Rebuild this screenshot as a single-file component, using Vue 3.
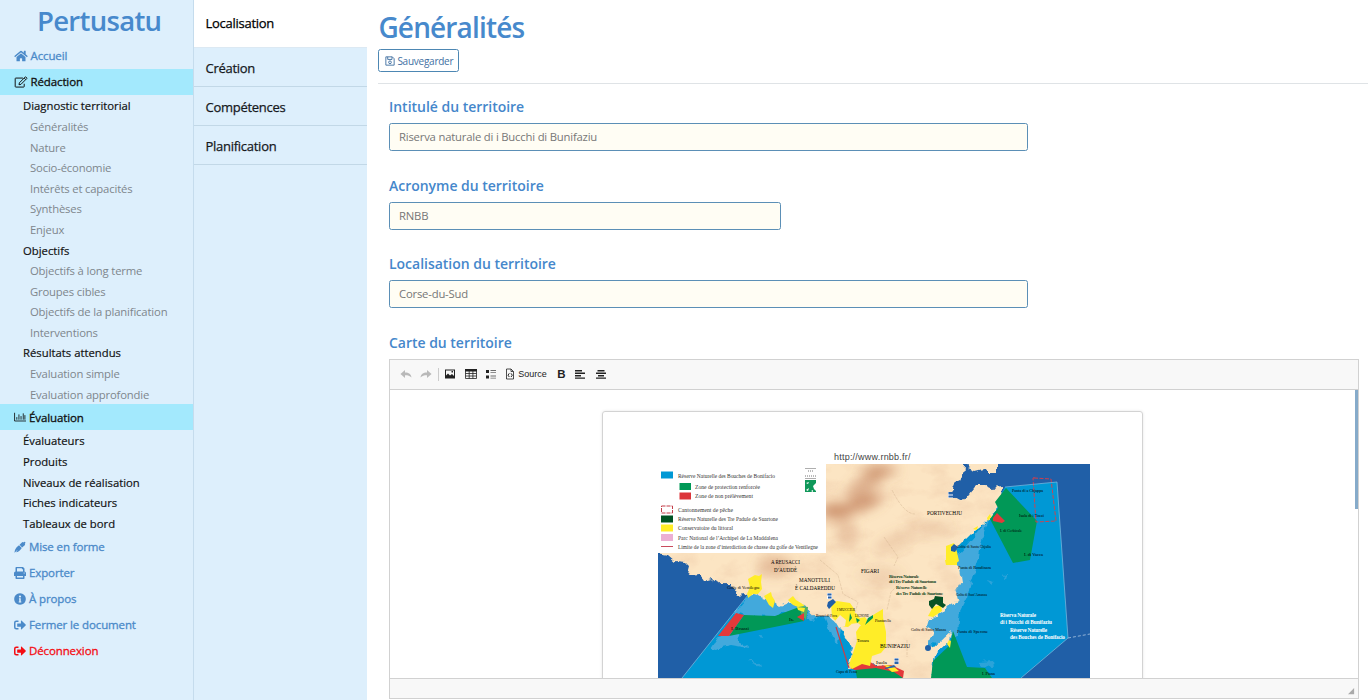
<script setup>
const redaction = [
  ['Diagnostic territorial', 0], ['Généralités', 1], ['Nature', 1], ['Socio-économie', 1],
  ['Intérêts et capacités', 1], ['Synthèses', 1], ['Enjeux', 1], ['Objectifs', 0],
  ['Objectifs à long terme', 1], ['Groupes cibles', 1], ['Objectifs de la planification', 1],
  ['Interventions', 1], ['Résultats attendus', 0], ['Evaluation simple', 1], ['Evaluation approfondie', 1],
]
const evaluation = ['Évaluateurs', 'Produits', 'Niveaux de réalisation', 'Fiches indicateurs', 'Tableaux de bord']
const tabs = ['Localisation', 'Création', 'Compétences', 'Planification']
const fields = [
  { label: 'Intitulé du territoire', value: 'Riserva naturale di i Bucchi di Bunifaziu', size: 'wide' },
  { label: 'Acronyme du territoire', value: 'RNBB', size: 'narrow' },
  { label: 'Localisation du territoire', value: 'Corse-du-Sud', size: 'wide' },
]
const legend = [
  [678, 477.5, 97, 'Réserve Naturelle des Bouches de Bonifacio'],
  [695, 489, 65, 'Zone de protection renforcée'],
  [695, 498, 58, 'Zone de non prélèvement'],
  [678, 512, 55, 'Cantonnement de pêche'],
  [678, 521, 100, 'Réserve Naturelle des Tre Padule de Suartone'],
  [678, 530, 55, 'Conservatoire du littoral'],
  [678, 539.5, 100, 'Parc National de l’Archipel de La Maddalena'],
  [678, 549, 140, 'Limite de la zone d’interdiction de chasse du golfe de Ventilegne'],
]
const places = [
  [771, 563.5, 29, 'A REUSACCI'], [774, 571.5, 23, 'D’AUDDÈ'], [799, 581.5, 31, 'MANOTTULI'],
  [795, 589.5, 40, 'È CALDAREDDU'], [861, 573, 18, 'FIGARI'], [927, 514.5, 35, 'PORTIVECHJU'],
  [880, 648, 30, 'BUNIFAZIU'],
]
const spots = [
  [727, 589, 33, 'Golfe di Ventilegne'], [731, 629.5, 18, 'I. Bruzzi'], [789, 620.5, 5, 'Is.'],
  [816, 616.5, 21, 'Bruzzi di Fora'], [837, 611, 18, 'I MUCCHJI'], [855, 616.5, 14, 'LIGNONE'],
  [857, 641.5, 12, 'Tonara'], [836, 673, 21, 'Capu di Fenu'], [1012, 492, 31, 'Punta di a Chjappa'],
  [1019, 517, 25, 'Isula di i Tozzi'], [1000, 532, 22, 'I. di Cerbicale'], [1024, 556, 19, 'I. di Vacca'],
  [957, 548, 34, 'Golfu di Santa Ghjulia'], [958, 568.5, 33, 'Punta di Rondinara'],
  [956, 595.5, 31, 'Golfu di Sant’Amanza'], [911, 630.5, 35, 'Golfu di Santa Manza'],
  [957, 632.5, 31, 'Punta di Sperone'], [875, 621.5, 16, 'Piantarella'], [876, 664, 11, 'Isula'],
  [982, 675, 13, 'I. Piana'],
]
</script>

<template>
  <div class="app">
    <aside class="sidebar">
      <h1 class="brand">Pertusatu</h1>
      <nav>
        <a class="row blue"><svg class="icon home" viewBox="0 0 576 512"><path d="M280 148 96 300v164q0 16 16 16h112q16 0 16-16v-95q0-16 16-16h64q16 0 16 16v95q0 16 16 16h112q16 0 16-16V300L296 148q-8-6-16 0z"/><path d="m571 251-83-69V44q0-12-12-12h-56q-12 0-12 12v73l-90-74q-30-24-60 0L4 251q-9 8-2 17l26 31q8 9 17 2L280 107q8-6 16 0l235 194q9 7 17-2l25-31q7-9-2-17z"/></svg><span>Accueil</span></a>
        <a class="row active"><svg class="icon edit" viewBox="0 0 576 512"><path fill="none" stroke="currentColor" stroke-width="42" stroke-linejoin="round" d="M370 88H64q-24 0-24 24v336q0 24 24 24h336q24 0 24-24V330M218 292 466 44q18-18 36 0l30 30q18 18 0 36L284 358l-82 14zM424 88l64 64"/></svg><span>Rédaction</span></a>
        <a v-for="r in redaction" :key="r[0]" class="item" :class="{ sub: r[1] }">{{ r[0] }}</a>
        <a class="row active evaluation"><svg class="icon small" viewBox="0 0 512 400"><path fill="none" stroke="currentColor" stroke-width="36" d="M24 20v350h488M120 315V205M210 315V90M300 315V160M395 315V45M465 315V120"/></svg><span>Évaluation</span></a>
        <a v-for="r in evaluation" :key="r" class="item">{{ r }}</a>
        <a class="row blue last"><svg class="icon small" viewBox="0 0 512 512"><path d="M22 502q0-84 34-150 40-90 116-140l44-30 114 114-28 44q-50 76-130 116l-62 28-22-10 62-64-20-20-70 76zM236 164 336 60q30-30 52-8l14 14 22-22q22-22 44 0l12 12q22 22 0 44l-22 22 8 8q22 22-8 52L346 276z"/></svg><span>Mise en forme</span></a>
        <a class="row blue"><svg class="icon small" viewBox="0 0 512 512"><path fill-rule="evenodd" d="M64 192V32Q64 0 96 0h288l64 64v128q64 0 64 64v112q0 16-16 16h-48v96q0 32-32 32H96q-32 0-32-32v-96H16q-16 0-16-16V256q0-64 64-64zm64 0h256V96h-48V48H128zm0 192v64h256v-64zM432 230a24 24 0 1 0 .1 0z"/></svg><span>Exporter</span></a>
        <a class="row blue"><svg class="icon small" viewBox="0 0 512 512"><path fill-rule="evenodd" d="M256 8a248 248 0 1 0 .1 0zm0 102a42 42 0 1 1-.1 0zm-44 112h76v138h24v40H200v-40h24v-98h-12z"/></svg><span>À propos</span></a>
        <a class="row blue"><svg class="icon small" viewBox="0 0 512 512"><path d="m497 273-168 168q-12 10-24 5-9-4-9-17v-96H152q-16 0-16-16V205q0-16 16-16h144V83q0-13 9-17 12-5 24 5l168 168q14 17 0 34zM192 436v-40q0-12-12-12H96q-32 0-32-32V160q0-32 32-32h84q12 0 12-12V76q0-12-12-12H96Q0 64 0 160v192q0 96 96 96h84q12 0 12-12z"/></svg><span>Fermer le document</span></a>
        <a class="row red"><svg class="icon small" viewBox="0 0 512 512"><path d="m497 273-168 168q-12 10-24 5-9-4-9-17v-96H152q-16 0-16-16V205q0-16 16-16h144V83q0-13 9-17 12-5 24 5l168 168q14 17 0 34zM192 436v-40q0-12-12-12H96q-32 0-32-32V160q0-32 32-32h84q12 0 12-12V76q0-12-12-12H96Q0 64 0 160v192q0 96 96 96h84q12 0 12-12z"/></svg><span>Déconnexion</span></a>
      </nav>
    </aside>

    <nav class="tabs">
      <a v-for="(t, i) in tabs" :key="t" class="tab" :class="{ current: i === 0 }">{{ t }}</a>
    </nav>

    <main class="main">
      <header class="head">
        <h2 class="title">Généralités</h2>
        <button class="save">
          <svg viewBox="0 0 14 14"><path fill="none" stroke="currentColor" stroke-width="1.3" d="M1.2 1.2h9l2.6 2.6v9H1.2zM3.8 1.2v3.6h6V1.2"/><circle cx="7" cy="8.8" r="1.9" fill="none" stroke="currentColor" stroke-width="1.3"/></svg>
          <span>Sauvegarder</span>
        </button>
      </header>
      <section class="form">
        <div v-for="f in fields" :key="f.label" class="field">
          <label class="label">{{ f.label }}</label>
          <div class="input" :class="f.size">{{ f.value }}</div>
        </div>
        <label class="label">Carte du territoire</label>
        <div class="editor">
          <div class="toolbar">
            <svg class="tool pale" viewBox="0 0 12 12"><path d="M5 2v2.5c4 0 6 1.8 6.5 5C9.8 7.600 8 7.200 5 7.200V10L.5 6z"/></svg>
            <svg class="tool pale" viewBox="0 0 12 12"><path d="M7 2v2.500C3 4.500 1 6.300.5 9.500 2.200 7.600 4 7.200 7 7.200V10l4.500-4z"/></svg>
            <i class="sep"></i>
            <svg class="tool image" viewBox="0 0 12 12"><path fill-rule="evenodd" d="M1 1.500h10v9H1zM2 2.500v5l2-2 2 2 2-1.500 2 2v-5.500zM7.500 3h1.500v1.500H7.500z"/></svg>
            <svg class="tool" viewBox="0 0 12 12"><path d="M0 1h12v2.500H0z"/><path fill="none" stroke="currentColor" d="M.5 2v8.500h11V2M.5 5.500h11M.5 8h11M4.200 3v7.500M7.900 3v7.500" stroke-width=".8"/></svg>
            <svg class="tool list" viewBox="0 0 12 12"><path d="M1 2h3v3H1zM1 7.500h3v3H1z"/><path d="M5.500 2H11v1H5.500zM5.500 4.300H11v.8H5.500zM5.500 7.500H11v1H5.500zM5.500 9.800H11v.8H5.500z" opacity=".65"/></svg>
            <span class="source"><svg class="tool" viewBox="0 0 12 12"><path fill="none" stroke="currentColor" stroke-width=".8" d="M2.500 11V1h4.500l2.500 2.500V11zM7 1v2.500h2.500"/><path fill="none" stroke="currentColor" d="M5.300 5.300 4 7.200l1.300 1.800M7 5.300l1.300 1.900L7 9"/></svg>Source</span>
            <b class="bold">B</b>
            <svg class="tool left" viewBox="0 0 12 12"><path d="M1 2h7v1.400H1zM1 4.500h10v1.400H1zM1 7h6v1.400H1zM1 9.400h10v1.400H1z"/></svg>
            <svg class="tool" viewBox="0 0 12 12"><path d="M2.500 2h7v1.400h-7zM1 4.500h10v1.400H1zM3 7h6v1.400H3zM1 9.400h10v1.400H1z"/></svg>
          </div>
          <div class="canvas">
            <article class="paper">
              <p class="link">http://www.rnbb.fr/</p>
              <svg class="map" viewBox="658 464 432 214">
                <defs>
                  <filter id="soft" x="-30%" y="-30%" width="160%" height="160%"><feGaussianBlur stdDeviation="6"/></filter>
                  <filter id="coast" x="-5%" y="-5%" width="110%" height="110%"><feTurbulence type="fractalNoise" baseFrequency=".13" numOctaves="2" seed="4" result="n"/><feDisplacementMap in="SourceGraphic" in2="n" scale="8" xChannelSelector="R" yChannelSelector="G"/></filter>
                  <filter id="grain" x="0" y="0" width="100%" height="100%"><feTurbulence type="fractalNoise" baseFrequency=".03 .05" numOctaves="5" seed="8"/><feColorMatrix values="0 0 0 0 .78  0 0 0 0 .47  0 0 0 0 .3  1.5 0 0 0 -.7"/></filter>
                  <clipPath id="land"><path d="M650 455H965L963 477 955 481 952 489 953 496 962 501 969 493 975 485 983 485 990 488 1003 487 1002 498 996 510 991 518 983 524 974 531 964 541 953 552 957 565 960 569 962 582 956 592 958 600 949 605 941 613 928 620 926 627 933 631 928 645 933 648 951 632 949 642 935 655 931 685H902L895 669 875 665 849 669 850 659 853 650 845 638 839 625 829 616 811 616 805 605 790 603 781 607 772 600 752 594 738 596 731 584 720 584 712 578 705 580 700 574 688 575 690 567 685 562 675 561 668 555 650 552Z"/></clipPath>
                </defs>
                <path fill="#205fa7" d="M658 464h432v214H658z"/>
                <path fill="#0098d5" d="M748 595 682 678H870L866 610 790 590zM1005 487 1057 482 1068 638 1021 678H922L920 610 940 550 988 517z"/>
                <g fill="#43a9dc" filter="url(#coast)">
                  <path d="m751 592-17 21 13 3 27 1 28-11 9 15 13-4 7 19 8 6 2-12 10 5-1 13 4 17 5 4 1-54-25-15zM725 628l11 7 5 8 8 5-18-3-9 2-6 3-5-1z"/>
                  <path d="m988 520-5 15-4 21-6 20-6 21-7 14-2 22-14 13-19-3 1-23 24-30 4-30z"/>
                  <path d="m748 660 11 3 1 3-11-4zM760 634l5 4-7-1zM978 662l15-1 1 7-13-1zM988 580l6 2-3 3zM1003 576l4-3-1 9zM916 650l15-18 3 10-11 13z" opacity=".65"/>
                </g>
                <g filter="url(#coast)">
                  <path fill="#fce5c3" d="M650 455H965L963 477 955 481 952 489 953 496 962 501 969 493 975 485 983 485 990 488 1003 487 1002 498 996 510 991 518 983 524 974 531 964 541 953 552 957 565 960 569 962 582 956 592 958 600 949 605 941 613 928 620 926 627 933 631 928 645 933 648 951 632 949 642 935 655 931 685H902L895 669 875 665 849 669 850 659 853 650 845 638 839 625 829 616 811 616 805 605 790 603 781 607 772 600 752 594 738 596 731 584 720 584 712 578 705 580 700 574 688 575 690 567 685 562 675 561 668 555 650 552ZM967 458H996V472H988L983 469 975 471 968 468Z"/>
                </g>
                <g clip-path="url(#land)">
                  <g filter="url(#soft)" fill="#b96f4a">
                    <ellipse cx="866" cy="484" rx="25" ry="9" opacity=".45" transform="rotate(-38 866 484)"/>
                    <ellipse cx="836" cy="511" rx="16" ry="9" opacity=".65"/>
                    <ellipse cx="864" cy="503" rx="19" ry="7" opacity=".65" transform="rotate(-20 864 503)"/>
                    <ellipse cx="880" cy="470" rx="19" ry="7" opacity=".4"/>
                    <ellipse cx="846" cy="534" rx="10" ry="14" opacity=".28"/>
                    <ellipse cx="895" cy="541" rx="23" ry="7" opacity=".22" transform="rotate(-25 895 541)"/>
                    <ellipse cx="935" cy="529" rx="18" ry="7" opacity=".18"/>
                    <ellipse cx="775" cy="566" rx="18" ry="10" opacity=".35"/>
                    <ellipse cx="880" cy="575" rx="24" ry="9" opacity=".12"/>
                  </g>
                  <path filter="url(#grain)" opacity=".5" d="M658 464h350v214H658z"/>
                  <path fill="none" stroke="#b99b78" stroke-width=".4" stroke-dasharray="3 1" opacity=".7" d="M892 490q12 24 23 24M884 537l14 20-4 9M820 560l18 15 5 19 15 8-5 19M903 580l-12 12-4 18M777 558l4 13M907 640v17"/>
                </g>
                <path fill="#019857" d="m744 615 31 1 27-10 4 3-2 12-75 15zM1006 488l31 33-7 39-17 3-23-44 8-11-3-6zM953 631l14 36 18 1 7 10h-61l2-17 17-16zM855 668l20-1 22 3 6 8h-46z"/>
                <path fill="#54ae63" d="m800 606 8 1-2 13-5-6z"/>
                <path fill="#e3393a" d="m736 613 8 2-15 21h-11zM797 617l7-4v8zM993 518l4-5 8 8-3 2-9-2zM850 668l9-4 10-3 7 5 15-1 13 6-1 7-9-6-18-4-21 2z"/>
                <path fill="#ffed28" d="m747 594 3-7-2-8 7-4 4 1 3-2-1 8 1 7-4 5-5 0-5 4zM764 596l7-4 1 4 3 5-2 7-4-3zM788 600l5-4 3 4 5 3 4 3-7 1-5-2zM797 607l8 1-1 4-6-2zM831 604l6-3 13 2 5 7-1 12-6 5-8-1-8-9zM850 615l6-2 4 5 5-1 5 7-7 3-5-4-8 1zM873 615l10-6v8l3 15v15l-5 6-9 3-2 10-8-2-10 5-3-4 5-15 3-9-1-9 4-6 7-4zM884 665l9 1 6 5-7 1zM946 546l8-3 3 9 2 9-5 4-8-3zM987 518l3-4 1 3-3 4zM973 529l5-3-1 4zM933 607l8-2 1 6-9 6-5-1zM949 640l2 1-1 7-3-4zM945 560h12v5h-11z"/>
                <path fill="#019857" d="m873 618-8 7 3-7 5-3zM850 613l2 5-3 4zM856 618l4 2-3 3z"/>
                <path fill="#fce6c9" d="m835 621 5-6 6 5-1 6-6 2z"/>
                <g fill="#205fa7"><circle cx="928" cy="648" r="3"/><path d="m951 547 3-3 4 3-3 5-4-1zM828 602l5-3 3 3-4 4-3 3-2-3z"/></g>
                <path fill="#075226" d="m929 601 5-2 1-3 8 1v6l3 2-3 3-5-3-2-1-4 5-3-4z"/>
                <path fill="none" stroke="#e33a42" stroke-width=".9" stroke-dasharray="4 1.500" d="M1034 478l17 1 5 42-20 1-3-44 3-1"/>
                <path fill="none" stroke="#c73e4a" stroke-width="1.200" d="m836 627 13 41"/>
                <path fill="none" stroke="#83bce0" stroke-width=".7" d="M748 595 682 678M1005 487l52-5 11 156-47 40"/>
                <path fill="none" stroke="#dceaf6" stroke-width=".6" stroke-dasharray="3 2" d="m1068 638 22-4"/>
                <g fill="#f8faff"><path d="M948 492h5v6h-5zM827 593h5v6h-5zM894 658h5v6h-5z"/><path fill="#2863aa" d="M948.500 492h4.500v2.500h-4.500zM948.500 495.500h4.500v2h-4.500zM827.500 593.500h4v2h-4zM828 596.500h3.500v2H828zM894.500 658.500h4v2h-4zM894.500 661.500h4v2.500h-4zM885 668l9-3 2 2-11 2z"/></g>
                <g class="maptext">
                  <text v-for="p in places" :key="p[3]" :x="p[0]" :y="p[1]" :textLength="p[2]" lengthAdjust="spacingAndGlyphs" font-size="6">{{ p[3] }}</text>
                  <text v-for="p in spots" :key="p[3]" :x="p[0]" :y="p[1]" :textLength="p[2]" lengthAdjust="spacingAndGlyphs" font-size="4.500">{{ p[3] }}</text>
                </g>
                <g class="maptext reserve" font-size="4.700" fill="#123f22"><text x="889" y="577.500" textLength="30">Riserva Naturale</text><text x="889" y="583" textLength="47">di i Tre Padule di Suartonu</text><text x="896" y="589" textLength="31">Réserve Naturelle</text><text x="896" y="594.500" textLength="47">des Tre Padule de Suartone</text></g>
                <g class="maptext reserve" font-size="5.300" fill="#fff"><text x="1000" y="617" textLength="36">Riserva Naturale</text><text x="1000" y="624" textLength="52">di i Bucchi di Bunifaziu</text><text x="1010" y="632" textLength="37">Réserve Naturelle</text><text x="1010" y="638.500" textLength="55">des Bouches de Bonifacio</text></g>
                <path fill="#fff" d="M658 464h168v89H658z"/>
                <path fill="#0098d5" d="M661 471.500h12v7h-12z"/><path fill="#009957" d="M679.500 483h11.500v7h-11.500z"/><path fill="#dc343a" d="M679.500 492.500h11.500v7h-11.500z"/>
                <path fill="none" stroke="#c33e48" stroke-dasharray="4 1" d="M661.500 506h11v7h-11z"/>
                <path fill="#005323" d="M661 515.500h12v7h-12z"/><path fill="#ffed28" d="M661 524.500h12v7h-12z"/><path fill="#ecafd3" d="M661 534h12v7h-12z"/><path stroke="#c94c5d" d="M661 546.500h12"/>
                <g class="maptext legend"><text v-for="l in legend" :key="l[3]" :x="l[0]" :y="l[1]" :textLength="l[2]" lengthAdjust="spacingAndGlyphs">{{ l[3] }}</text></g>
                <path stroke="#777" stroke-width=".6" d="M805 468.500h11M805 478.500h11"/><path stroke="#777" stroke-dasharray="1 1" d="M808 471h5M805 476h11"/>
                <path fill="#10985a" d="M805 480h11v12h-11z"/><path fill="#fff" d="m816 483-3 3 1 3 2 2zM806 483l3-1-1 2zM806 490l3-2-1 3zM811 491l2-1v2z"/>
              </svg>
            </article>
            <i class="thumb"></i>
          </div>
          <div class="status"><svg viewBox="0 0 8 8"><path d="M7 0v7H0z"/></svg></div>
        </div>
      </section>
    </main>
  </div>
</template>

<style>
html, body { margin: 0; overflow: hidden; background: #fff; }
</style>

<style scoped>
* { box-sizing: border-box; }
.app { display: flex; width: 1368px; height: 700px; overflow: hidden; font-family: "Open Sans", "Noto Sans", sans-serif; color: #16191c; }
.sidebar { flex: none; width: 194px; border-right: 1px solid #c5dced; background: #ddeffc; }
h1, h2, p { margin: 0; }
.brand { height: 43.2px; padding-left: 37px; font-size: 27.5px; font-weight: 600; line-height: 42px; letter-spacing: -.7px; color: #4789cc; }
.row { display: flex; align-items: center; height: 25.2px; padding-left: 14px; margin-bottom: 1px; font-size: 11.500px; font-weight: 400; -webkit-text-stroke: .3px currentColor; letter-spacing: -.12px; white-space: nowrap; }
.row.last, .row.last ~ .row { margin-bottom: .8px; position: relative; top: .6px; }
.blue { color: #4b8ac9; }
.red { color: #f40d13; }
.active { background: #a3e9fd; color: #111; }
.icon { width: 12px; height: 12px; margin-right: 3px; fill: currentColor; flex: none; }
.icon.home, .icon.edit { width: 14px; margin-right: 2.500px; }
.item { display: flex; align-items: center; height: 20.6px; padding: 0 0 0 23px; font-size: 11.300px; -webkit-text-stroke: .18px currentColor; letter-spacing: 0; white-space: nowrap; color: #111; }
.item.sub { padding-left: 30px; -webkit-text-stroke: 0; letter-spacing: -.17px; color: #7e868c; }
.tabs { flex: none; width: 173px; background: #ddeffc; }
.tab { display: flex; align-items: center; height: 39px; padding: 1px 0 0 11.500px; border-bottom: 1px solid #c2d8e7; font-size: 13px; -webkit-text-stroke: .25px currentColor; letter-spacing: -.27px; }
.tab.current { height: 48px; padding: 0 0 1px 11.500px; background: #fff; border-color: #dce9f3; color: #000; }
.main { flex: 1; min-width: 0; padding-left: 11.400px; }
.head { height: 84px; border-bottom: 1px solid #dfe3e6; padding-top: 6px; }
.title { height: 43px; font-size: 28px; font-weight: 600; line-height: 43px; letter-spacing: -.85px; color: #4789cc; }
.save { display: flex; align-items: center; width: 81px; height: 23px; padding: 0 0 0 6px; gap: 2px; border: 1px solid #4d87b3; border-radius: 2.500px; background: #fff; color: #4270a2; font: 400 10px "Open Sans", sans-serif; letter-spacing: -.25px; white-space: nowrap; }
.save svg { width: 10px; height: 10px; flex: none; }
.form { padding: 11px 0 0 10.600px; }
.field { height: 78.6px; }
.label { display: block; height: 28px; font-size: 14px; font-weight: 600; line-height: 24px; letter-spacing: -.02px; color: #4587cb; }
.input { height: 28px; padding-left: 9px; border: 1px solid #5b8fb6; border-radius: 2.500px; background: #fffdf4; color: #777; font-size: 11.300px; line-height: 26px; letter-spacing: -.2px; }
.wide { width: 639px; }
.narrow { width: 392px; }
.editor { width: 970px; height: 340px; border: 1px solid #d1d1d1; color: #222; }
.toolbar { display: flex; align-items: center; height: 30px; padding-left: 10px; border-bottom: 1px solid #d1d1d1; background: #f8f8f8; font-family: "Liberation Sans", sans-serif; font-size: 9px; }
.tool { width: 12px; height: 12px; margin-right: 8.300px; fill: currentColor; flex: none; }
.pale { color: #b9b9b9; }
.pale + .pale { margin-right: 6px; }
.sep { width: 1px; height: 13px; margin-right: 5px; background: #ccc; }
.source { display: flex; align-items: center; margin: 0 10.500px 0 -1.200px; }
.source .tool { margin-right: 2.300px; }
.bold { width: 8px; margin-right: 9px; font-size: 11.500px; }
.canvas { position: relative; height: 288px; padding: 21px 0 0 212px; overflow: hidden; }
.paper { width: 541px; height: 400px; padding: 39px 0 0 55px; border: 1px solid #d3d3d3; border-radius: 3px; box-shadow: 0 0 3px rgba(0, 0, 0, .1); }
.link { height: 13px; padding-left: 176px; font: 9px/13px "Liberation Sans", sans-serif; letter-spacing: .22px; color: #444; }
.map { display: block; width: 432px; height: 214px; }
.maptext { font-family: "Liberation Serif", serif; }
.legend { font-size: 5.800px; fill: #333; }
.reserve { font-weight: 700; }
.thumb { position: absolute; right: 0; top: 0; width: 3px; height: 119px; background: #86abca; }
.status { display: flex; justify-content: flex-end; align-items: flex-end; height: 20px; padding: 0 3px 3px 0; border-top: 1px solid #d1d1d1; background: #f8f8f8; }
.status svg { width: 7px; height: 7px; fill: #aaa; }
</style>
